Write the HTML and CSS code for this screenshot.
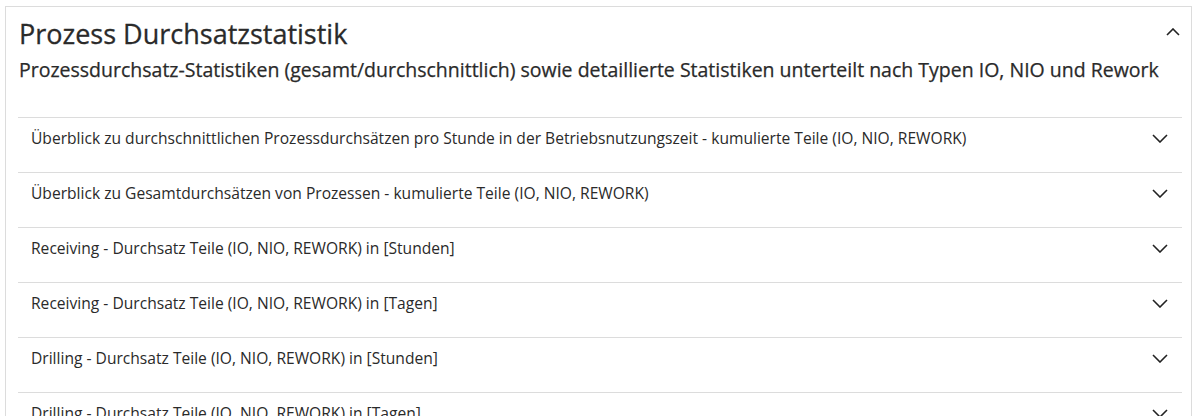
FILE: index.html
```html
<!DOCTYPE html>
<html lang="de">
<head>
<meta charset="utf-8">
<title>Prozess Durchsatzstatistik</title>
<link rel="stylesheet" href="styles.css">
</head>
<body>
<section class="card">
  <header class="card-head">
    <div class="head-text">
      <h1 class="title">Prozess Durchsatzstatistik</h1>
      <h2 class="subtitle">Prozessdurchsatz-Statistiken (gesamt/durchschnittlich) sowie detaillierte Statistiken unterteilt nach Typen IO, NIO und Rework</h2>
    </div>
    <svg class="chev-up" width="14" height="8" viewBox="0 0 14 8"><path d="M1 7 L7 1 L13 7" fill="none" stroke="#222" stroke-width="1.6"/></svg>
  </header>
  <ul class="list">
    <li class="row"><span class="label">Überblick zu durchschnittlichen Prozessdurchsätzen pro Stunde in der Betriebsnutzungszeit - kumulierte Teile (IO, NIO, REWORK)</span><svg class="chev" width="16" height="9" viewBox="0 0 16 9"><path d="M1 1 L8 8 L15 1" fill="none" stroke="#222" stroke-width="1.6"/></svg></li>
    <li class="row"><span class="label">Überblick zu Gesamtdurchsätzen von Prozessen - kumulierte Teile (IO, NIO, REWORK)</span><svg class="chev" width="16" height="9" viewBox="0 0 16 9"><path d="M1 1 L8 8 L15 1" fill="none" stroke="#222" stroke-width="1.6"/></svg></li>
    <li class="row"><span class="label">Receiving - Durchsatz Teile (IO, NIO, REWORK) in [Stunden]</span><svg class="chev" width="16" height="9" viewBox="0 0 16 9"><path d="M1 1 L8 8 L15 1" fill="none" stroke="#222" stroke-width="1.6"/></svg></li>
    <li class="row"><span class="label">Receiving - Durchsatz Teile (IO, NIO, REWORK) in [Tagen]</span><svg class="chev" width="16" height="9" viewBox="0 0 16 9"><path d="M1 1 L8 8 L15 1" fill="none" stroke="#222" stroke-width="1.6"/></svg></li>
    <li class="row"><span class="label">Drilling - Durchsatz Teile (IO, NIO, REWORK) in [Stunden]</span><svg class="chev" width="16" height="9" viewBox="0 0 16 9"><path d="M1 1 L8 8 L15 1" fill="none" stroke="#222" stroke-width="1.6"/></svg></li>
    <li class="row"><span class="label">Drilling - Durchsatz Teile (IO, NIO, REWORK) in [Tagen]</span><svg class="chev" width="16" height="9" viewBox="0 0 16 9"><path d="M1 1 L8 8 L15 1" fill="none" stroke="#222" stroke-width="1.6"/></svg></li>
  </ul>
</section>
</body>
</html>
```
FILE: styles.css
```css
html, body {
  margin: 0;
  padding: 0;
  background: #fff;
  font-family: "Open Sans", "Noto Sans", sans-serif;
  color: #2a2a2a;
  overflow: hidden;
}
.card {
  margin: 6px 4px 0 5px;
  border: 1px solid #dcdcdc;
  border-bottom: none;
  padding: 0 9px 0 12px;
  height: 420px;
}
.card-head {
  display: flex;
  align-items: flex-start;
  justify-content: space-between;
  padding: 10px 0 0 1px;
  height: 100px;
}
.head-text {
  flex: 1;
  min-width: 0;
}
.title {
  margin: 0;
  font-size: 27px;
  font-weight: 400;
  line-height: 34px;
  -webkit-text-stroke: 0.3px #2a2a2a;
}
.subtitle {
  margin: 6px 0 0 0;
  font-size: 19.5px;
  font-weight: 400;
  line-height: 26px;
  white-space: nowrap;
  -webkit-text-stroke: 0.25px #2a2a2a;
}
.chev-up {
  flex-shrink: 0;
  margin: 11px 2px 0 0;
}
.list {
  list-style: none;
  margin: 0;
  padding: 0;
}
.row {
  display: flex;
  justify-content: space-between;
  align-items: flex-start;
  border-top: 1px solid #dcdcdc;
  height: 54px;
  padding: 0 14px 0 13px;
}
.label {
  font-size: 15.6px;
  line-height: 20px;
  margin-top: 10px;
}
.chev {
  margin-top: 16px;
}
```
